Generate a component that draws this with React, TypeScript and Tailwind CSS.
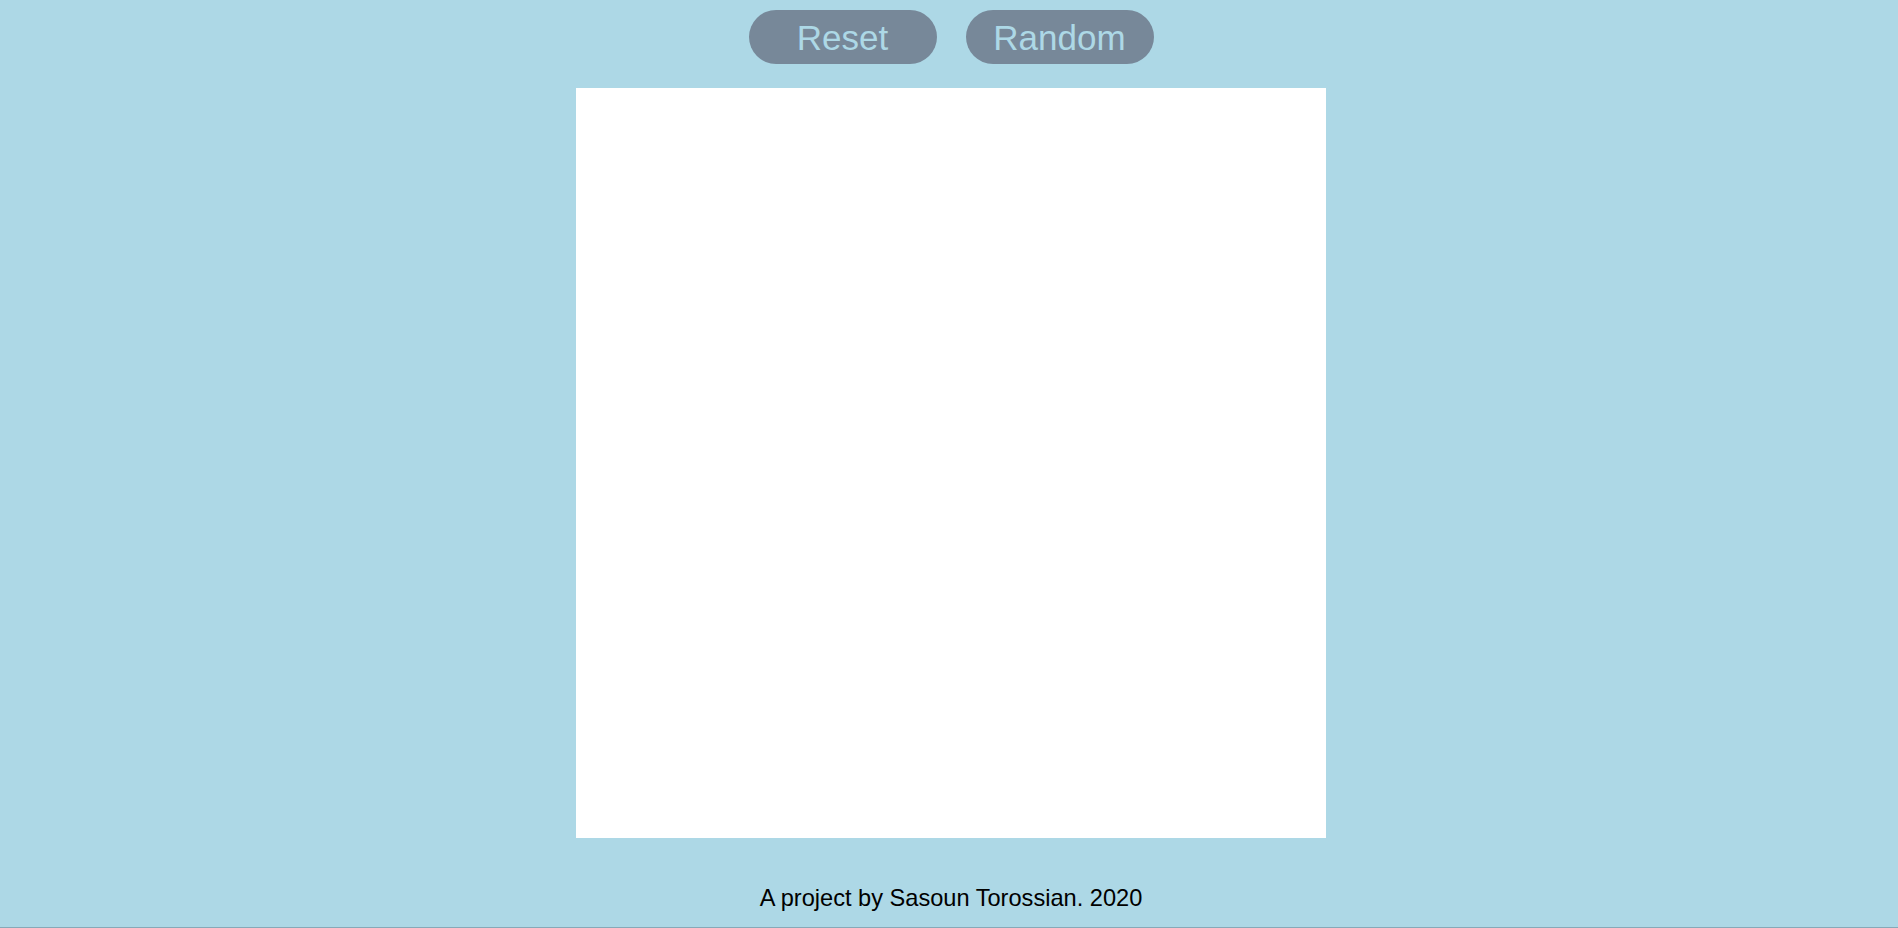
import React from 'react';

const App: React.FC = () => {
  const handleReset = () => {};
  const handleRandom = () => {};

  return (
    <div
      className="h-[928px] bg-[#add8e6] border-b border-[#86a9b8] flex flex-col items-center pt-[10px] pl-[4px]"
      style={{ fontFamily: '"Liberation Sans", Arial, sans-serif' }}
    >
      {/* Controls */}
      <div className="flex gap-[29px]">
        <button
          onClick={handleReset}
          className="w-[188px] h-[54px] rounded-full bg-[#778899] text-[#add8e6] text-[35px] leading-none"
        >
          Reset
        </button>
        <button
          onClick={handleRandom}
          className="w-[188px] h-[54px] rounded-full bg-[#778899] text-[#add8e6] text-[35px] leading-none"
        >
          Random
        </button>
      </div>

      {/* Canvas */}
      <div className="mt-[24px] w-[750px] h-[750px] bg-white" />

      <p className="mt-[43px] text-[23.6px] text-black">A project by Sasoun Torossian. 2020</p>
    </div>
  );
};

export default App;
